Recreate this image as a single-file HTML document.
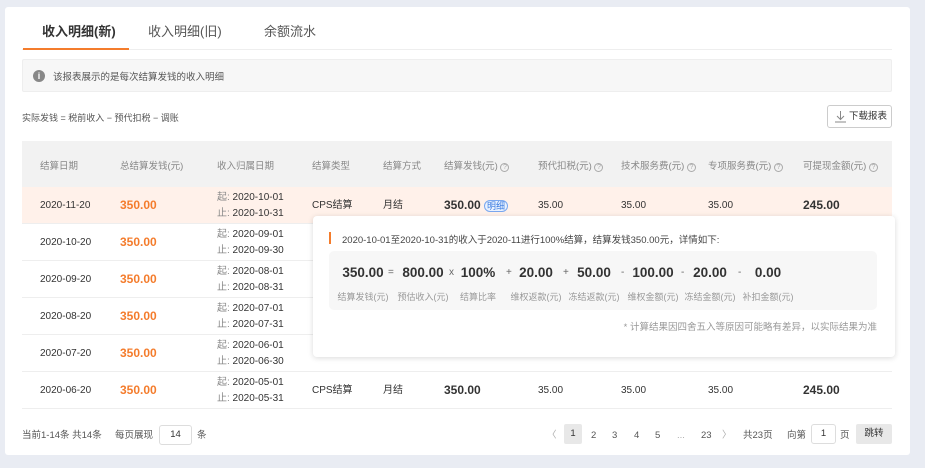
<!DOCTYPE html>
<html><head><meta charset="utf-8"><style>
*{margin:0;padding:0;box-sizing:border-box}
body{width:925px;height:468px;background:#e9ecf3;font-family:"Liberation Sans","Noto Sans CJK SC",sans-serif;font-size:10px;color:#333;position:relative;overflow:hidden}
.abs{position:absolute;white-space:nowrap}
.tab{position:absolute;top:21px;font-size:13px;color:#555}
.gray{color:#888}
.hd{position:absolute;top:158px;color:#888;font-size:9.5px;white-space:nowrap}
.row{position:absolute;left:22px;width:870px;height:37px;border-bottom:1px solid #eee}
.row div{position:absolute;top:0;line-height:37px;white-space:nowrap}
.row .dt{top:3px;line-height:16px}
.or{color:#f47c2c;font-size:12px;font-weight:bold}
.b{font-weight:bold;font-size:12px}
.q{display:inline-block;width:9px;height:9px;border:1px solid #aaa;border-radius:50%;font-size:7px;line-height:8px;text-align:center;color:#aaa;vertical-align:0}
.c{position:absolute;width:70px;text-align:center;white-space:nowrap}
.num{top:265px;font-size:13.5px;font-weight:bold;color:#333}
.lab{top:290px;font-size:9px;color:#999}
.op{position:absolute;top:267px;font-size:10px;color:#666}
.pg{position:absolute;top:427px;height:17px;line-height:17px;font-size:9.5px;color:#555;white-space:nowrap}
</style></head><body>
<div class="abs" style="left:5px;top:7px;width:905px;height:448px;background:#fff;border-radius:3px"></div>
<div class="tab" style="left:42px;color:#333;font-weight:bold">收入明细(新)</div>
<div class="tab" style="left:148px">收入明细(旧)</div>
<div class="tab" style="left:264px">余额流水</div>
<div class="abs" style="left:22px;top:49px;width:870px;height:1px;background:#eee"></div>
<div class="abs" style="left:23px;top:48px;width:106px;height:2px;background:#f47c2c"></div>
<div class="abs" style="left:22px;top:59px;width:870px;height:33px;background:#f7f7f7;border:1px solid #eee;border-radius:2px"></div>
<div class="abs" style="left:33px;top:70px;width:12px;height:12px;border-radius:50%;background:#888;color:#fff;font-size:9px;font-weight:bold;text-align:center;line-height:12px">i</div>
<div class="abs" style="left:53px;top:69px;color:#555;font-size:9.5px">该报表展示的是每次结算发钱的收入明细</div>
<div class="abs" style="left:22px;top:111px;color:#555;font-size:9px">实际发钱 = 税前收入 − 预代扣税 − 调账</div>
<div class="abs" style="left:827px;top:105px;width:65px;height:23px;border:1px solid #ccc;border-radius:3px;line-height:21px;padding-left:21px;font-size:9.5px;color:#333">下载报表
<svg style="position:absolute;left:6px;top:4px" width="13" height="13" viewBox="0 0 13 13" fill="none" stroke="#888" stroke-width="1"><path d="M6.5 1v8M3 6l3.5 3.5L10 6M1 12h11"/></svg></div>
<div class="abs" style="left:22px;top:141px;width:870px;height:46px;background:#f2f2f2"></div>
<div class="hd" style="left:40px">结算日期</div>
<div class="hd" style="left:120px">总结算发钱(元)</div>
<div class="hd" style="left:217px">收入归属日期</div>
<div class="hd" style="left:312px">结算类型</div>
<div class="hd" style="left:383px">结算方式</div>
<div class="hd" style="left:444px">结算发钱(元) <span class="q">?</span></div>
<div class="hd" style="left:538px">预代扣税(元) <span class="q">?</span></div>
<div class="hd" style="left:621px">技术服务费(元) <span class="q">?</span></div>
<div class="hd" style="left:708px">专项服务费(元) <span class="q">?</span></div>
<div class="hd" style="left:803px">可提现金额(元) <span class="q">?</span></div>

<div class="row" style="top:187px;background:#fff1ea"><div style="left:18px">2020-11-20</div><div class="or" style="left:98px">350.00</div><div class="dt" style="left:195px"><span class="gray">起:</span> 2020-10-01<br><span class="gray">止:</span> 2020-10-31</div><div style="left:290px">CPS结算</div><div style="left:361px">月结</div><div class="b" style="left:422px">350.00 <span style="font-size:9px;font-weight:normal;color:#3a7be0;border:1px solid #7aa7ee;border-radius:7px;padding:0 2px;background:#eaf2ff">明细</span></div><div style="left:516px">35.00</div><div style="left:599px">35.00</div><div style="left:686px">35.00</div><div class="b" style="left:781px">245.00</div></div>
<div class="row" style="top:224px"><div style="left:18px">2020-10-20</div><div class="or" style="left:98px">350.00</div><div class="dt" style="left:195px"><span class="gray">起:</span> 2020-09-01<br><span class="gray">止:</span> 2020-09-30</div></div>
<div class="row" style="top:261px"><div style="left:18px">2020-09-20</div><div class="or" style="left:98px">350.00</div><div class="dt" style="left:195px"><span class="gray">起:</span> 2020-08-01<br><span class="gray">止:</span> 2020-08-31</div></div>
<div class="row" style="top:298px"><div style="left:18px">2020-08-20</div><div class="or" style="left:98px">350.00</div><div class="dt" style="left:195px"><span class="gray">起:</span> 2020-07-01<br><span class="gray">止:</span> 2020-07-31</div></div>
<div class="row" style="top:335px"><div style="left:18px">2020-07-20</div><div class="or" style="left:98px">350.00</div><div class="dt" style="left:195px"><span class="gray">起:</span> 2020-06-01<br><span class="gray">止:</span> 2020-06-30</div></div>
<div class="row" style="top:372px"><div style="left:18px">2020-06-20</div><div class="or" style="left:98px">350.00</div><div class="dt" style="left:195px"><span class="gray">起:</span> 2020-05-01<br><span class="gray">止:</span> 2020-05-31</div><div style="left:290px">CPS结算</div><div style="left:361px">月结</div><div class="b" style="left:422px">350.00</div><div style="left:516px">35.00</div><div style="left:599px">35.00</div><div style="left:686px">35.00</div><div class="b" style="left:781px">245.00</div></div>

<div class="abs" style="left:313px;top:216px;width:582px;height:141px;background:#fff;border-radius:4px;box-shadow:0 1px 6px rgba(0,0,0,.15)"></div>
<div class="abs" style="left:329px;top:232px;width:2px;height:12px;background:#f47c2c"></div>
<div class="abs" style="left:342px;top:232px;color:#444;font-size:9.5px">2020-10-01至2020-10-31的收入于2020-11进行100%结算，结算发钱350.00元，详情如下:</div>
<div class="abs" style="left:329px;top:251px;width:548px;height:59px;background:#f7f7f7;border-radius:5px"></div>

<div class="c num" style="left:328px">350.00</div><div class="c lab" style="left:328px">结算发钱(元)</div>
<div class="op" style="left:388px">=</div>
<div class="c num" style="left:388px">800.00</div><div class="c lab" style="left:388px">预估收入(元)</div>
<div class="op" style="left:449px">x</div>
<div class="c num" style="left:443px">100%</div><div class="c lab" style="left:443px">结算比率</div>
<div class="op" style="left:506px">+</div>
<div class="c num" style="left:501px">20.00</div><div class="c lab" style="left:501px">维权返款(元)</div>
<div class="op" style="left:563px">+</div>
<div class="c num" style="left:559px">50.00</div><div class="c lab" style="left:559px">冻结返款(元)</div>
<div class="op" style="left:621px">-</div>
<div class="c num" style="left:618px">100.00</div><div class="c lab" style="left:618px">维权金额(元)</div>
<div class="op" style="left:681px">-</div>
<div class="c num" style="left:675px">20.00</div><div class="c lab" style="left:675px">冻结金额(元)</div>
<div class="op" style="left:738px">-</div>
<div class="c num" style="left:733px">0.00</div><div class="c lab" style="left:733px">补扣金额(元)</div>
<div class="abs" style="left:877px;top:319px;transform:translateX(-100%);color:#999;font-size:9.5px">* 计算结果因四舍五入等原因可能略有差异，以实际结果为准</div>

<div class="pg" style="left:22px">当前1-14条 共14条</div>
<div class="pg" style="left:115px">每页展现</div>
<div class="abs" style="left:159px;top:425px;width:33px;height:20px;border:1px solid #ddd;border-radius:3px;text-align:center;line-height:18px;font-size:9.5px">14</div>
<div class="pg" style="left:197px">条</div>
<div class="pg" style="left:547px;color:#aaa">〈</div>
<div class="abs" style="left:564px;top:424px;width:18px;height:20px;background:#e8e8e8;border-radius:2px;text-align:center;line-height:20px;font-size:9.5px">1</div>
<div class="pg" style="left:591px">2</div>
<div class="pg" style="left:612px">3</div>
<div class="pg" style="left:634px">4</div>
<div class="pg" style="left:655px">5</div>
<div class="pg" style="left:677px;color:#aaa">...</div>
<div class="pg" style="left:701px">23</div>
<div class="pg" style="left:722px;color:#aaa">〉</div>
<div class="pg" style="left:743px">共23页</div>
<div class="pg" style="left:787px">向第</div>
<div class="abs" style="left:811px;top:424px;width:25px;height:20px;border:1px solid #ddd;border-radius:3px;text-align:center;line-height:18px;font-size:9.5px">1</div>
<div class="pg" style="left:840px">页</div>
<div class="abs" style="left:856px;top:424px;width:36px;height:20px;background:#e8e8e8;border-radius:2px;text-align:center;line-height:20px;font-size:9.5px">跳转</div>
</body></html>
